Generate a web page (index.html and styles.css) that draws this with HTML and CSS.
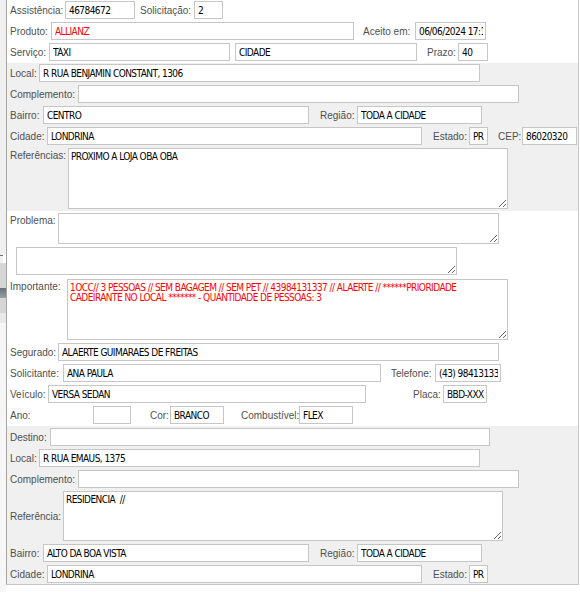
FILE: index.html
```html
<!DOCTYPE html>
<html lang="pt-BR">
<head>
<meta charset="utf-8">
<title>Assistência</title>
<link rel="stylesheet" href="styles.css">
</head>
<body>
<div class="screen">
  <div class="gutter">
    <div class="gt gt-a"></div>
    <div class="gt gt-tick"></div>
    <div class="gt gt-b"></div>
    <div class="gt gt-c"></div>
    <div class="gt gt-d"></div>
    <div class="gt gt-e"></div>
    <div class="gt gt-f"></div>
  </div>
  <div class="panel">
    <section class="sec sec-top">
      <div class="row">
        <label class="lab l55">Assistência:</label><input class="fld i70" value="46784672">
        <label class="lab l54 g5">Solicitação:</label><input class="fld i29" value="2">
      </div>
      <div class="row">
        <label class="lab l41">Produto:</label><input class="fld i303 red" value="ALLIANZ">
        <label class="lab l52 g9">Aceito em:</label><input class="fld i71" value="06/06/2024 17:18">
      </div>
      <div class="row">
        <label class="lab l39">Serviço:</label><input class="fld i181" value="TÁXI">
        <input class="fld i182 g5" value="CIDADE">
        <label class="lab l31 g10">Prazo:</label><input class="fld i30" value="40">
      </div>
    </section>

    <section class="sec sec-gray sec-g1">
      <div class="row">
        <label class="lab l29">Local:</label><input class="fld i441" value="R RUA BENJAMIN CONSTANT, 1306">
      </div>
      <div class="row">
        <label class="lab l68">Complemento:</label><input class="fld i441" value="">
      </div>
      <div class="row">
        <label class="lab l33">Bairro:</label><input class="fld i266" value="CENTRO">
        <label class="lab l37 g11">Região:</label><input class="fld i125" value="TODA A CIDADE">
      </div>
      <div class="row">
        <label class="lab l37">Cidade:</label><input class="fld i375" value="LONDRINA">
        <label class="lab l36 g11">Estado:</label><input class="fld i19" value="PR">
        <label class="lab l24 g10">CEP:</label><input class="fld i55" value="86020320">
      </div>
      <div class="row row-ta">
        <label class="lab l58">Referências:</label><textarea class="area i440 h61">PROXIMO A LOJA OBA OBA</textarea>
      </div>
    </section>

    <section class="sec sec-mid">
      <div class="row row-ta">
        <label class="lab l48">Problema:</label><textarea class="area i441 h31"></textarea>
      </div>
      <div class="row row-ta">
        <textarea class="area i441 h28 g6"></textarea>
      </div>
      <div class="row row-ta row-imp">
        <label class="lab l57">Importante:</label><textarea class="area i441 h61 red">1OCC// 3 PESSOAS // SEM BAGAGEM // SEM PET // 43984131337 // ALAERTE // ******PRIORIDADE
CADEIRANTE NO LOCAL ******* - QUANTIDADE DE PESSOAS: 3</textarea>
      </div>
      <div class="row">
        <label class="lab l48">Segurado:</label><input class="fld i441" value="ALAERTE GUIMARAES DE FREITAS">
      </div>
      <div class="row">
        <label class="lab l53">Solicitante:</label><input class="fld i318" value="ANA PAULA">
        <label class="lab l44 g10">Telefone:</label><input class="fld i66" value="(43) 984131337">
      </div>
      <div class="row">
        <label class="lab l38">Veículo:</label><input class="fld i318" value="VERSA SEDAN">
        <label class="lab l30 g47">Placa:</label><input class="fld i44" value="BBD-XXX0">
      </div>
      <div class="row">
        <label class="lab l83">Ano:</label><input class="fld i38" value="">
        <label class="lab l20 g19">Cor:</label><input class="fld i54" value="BRANCO">
        <label class="lab l58 g17">Combustível:</label><input class="fld i54" value="FLEX">
      </div>
    </section>

    <section class="sec sec-gray sec-g2">
      <div class="row">
        <label class="lab l40">Destino:</label><input class="fld i440" value="">
      </div>
      <div class="row">
        <label class="lab l29">Local:</label><input class="fld i441" value="R RUA EMAUS, 1375">
      </div>
      <div class="row">
        <label class="lab l68">Complemento:</label><input class="fld i441" value="">
      </div>
      <div class="row row-mid">
        <label class="lab l53">Referência:</label><textarea class="area i440 h50">RESIDENCIA  //</textarea>
      </div>
      <div class="row">
        <label class="lab l33">Bairro:</label><input class="fld i266" value="ALTO DA BOA VISTA">
        <label class="lab l37 g11">Região:</label><input class="fld i125" value="TODA A CIDADE">
      </div>
      <div class="row">
        <label class="lab l37">Cidade:</label><input class="fld i375" value="LONDRINA">
        <label class="lab l36 g11">Estado:</label><input class="fld i19" value="PR">
      </div>
    </section>
  </div>
</div>
</body>
</html>
```

FILE: styles.css
```css
html, body {
  margin: 0;
  padding: 0;
  background: #ffffff;
}

.screen {
  display: flex;
  width: 580px;
  height: 592px;
  overflow: hidden;
}

/* left window gutter */
.gutter {
  width: 6px;
  flex: none;
  display: flex;
  flex-direction: column;
}
.gt { flex: none; }
.gt-a { height: 255px; background: #f0f0f0; }
.gt-tick { height: 8px; background: #f0f0f0; border-top: 1px solid #6a6a6a; box-sizing: border-box; width: 3px; }
.gt-b { height: 25px; background: #d7d7d7; }
.gt-c { height: 10px; background: linear-gradient(#68717a, #98a0a6); }
.gt-d { height: 15px; background: #d6d6d6; }
.gt-e { height: 10px; background: #e9e9e9; }
.gt-f { flex: 1; background: #f6f6f6; }

/* main form panel */
.panel {
  width: 571px;
  height: 584px;
  flex: none;
  border-left: 1px solid #a4a4a4;
  border-right: 1px solid #c8c8c8;
  border-bottom: 1px solid #c8c8c8;
  display: flex;
  flex-direction: column;
}

.sec {
  display: flex;
  flex-direction: column;
  gap: 3px;
  padding-left: 3px;
}
.sec-top { padding-top: 1px; padding-bottom: 2px; }
.sec-gray { background: #f0f0f0; }
.sec-g1 { padding-top: 1px; padding-bottom: 2px; }
.sec-mid { padding-top: 2px; padding-bottom: 2px; }
.sec-g2 { padding-top: 2px; flex: 1; }

.row {
  display: flex;
  align-items: center;
  height: 18px;
}
.row-ta {
  align-items: flex-start;
  height: auto;
}
.row-mid {
  align-items: center;
  height: auto;
}
.row-imp { margin-top: 1px; }

.lab {
  flex: none;
  font-family: "Liberation Sans", Arial, sans-serif;
  font-size: 10px;
  color: #4f4f4f;
  white-space: nowrap;
}
.row-ta .lab { padding-top: 2px; }

.fld, .area {
  flex: none;
  box-sizing: border-box;
  margin: 0;
  border: 1px solid #c6c6c6;
  border-radius: 0;
  background: #ffffff;
  color: #000000;
  font-family: "DejaVu Sans Condensed", "Liberation Sans", sans-serif;
  font-size: 10px;
  letter-spacing: -0.55px;
  outline: none;
}
.fld {
  height: 18px;
  padding: 0 2px 0 3px;
}
.area {
  padding: 3px 2px;
  line-height: 10px;
  overflow: hidden;
  resize: both;
}
.red { color: #ff0000; }

/* label widths */
.l20 { width: 20px; }
.l24 { width: 24px; }
.l29 { width: 29px; }
.l30 { width: 30px; }
.l31 { width: 31px; }
.l33 { width: 33px; }
.l36 { width: 36px; }
.l37 { width: 37px; }
.l38 { width: 38px; }
.l39 { width: 39px; }
.l40 { width: 40px; }
.l41 { width: 41px; }
.l44 { width: 44px; }
.l48 { width: 48px; }
.l52 { width: 52px; }
.l53 { width: 53px; }
.l54 { width: 54px; }
.l55 { width: 55px; }
.l57 { width: 57px; }
.l58 { width: 58px; }
.l68 { width: 68px; }
.l83 { width: 83px; }

/* field widths */
.i19 { width: 19px; }
.i29 { width: 29px; }
.i30 { width: 30px; }
.i38 { width: 38px; }
.i44 { width: 44px; }
.i54 { width: 54px; }
.i55 { width: 55px; }
.i66 { width: 66px; }
.i70 { width: 70px; }
.i71 { width: 71px; }
.i125 { width: 125px; }
.i181 { width: 181px; }
.i182 { width: 182px; }
.i266 { width: 266px; }
.i303 { width: 303px; }
.i318 { width: 318px; }
.i375 { width: 375px; }
.i440 { width: 440px; }
.i441 { width: 441px; }

.h28 { height: 28px; }
.h31 { height: 31px; }
.h50 { height: 50px; }
.h61 { height: 61px; }

/* gaps before a following group */
.g5 { margin-left: 5px; }
.g6 { margin-left: 6px; }
.g9 { margin-left: 9px; }
.g10 { margin-left: 10px; }
.g11 { margin-left: 11px; }
.g17 { margin-left: 17px; }
.g19 { margin-left: 19px; }
.g47 { margin-left: 47px; }
```
